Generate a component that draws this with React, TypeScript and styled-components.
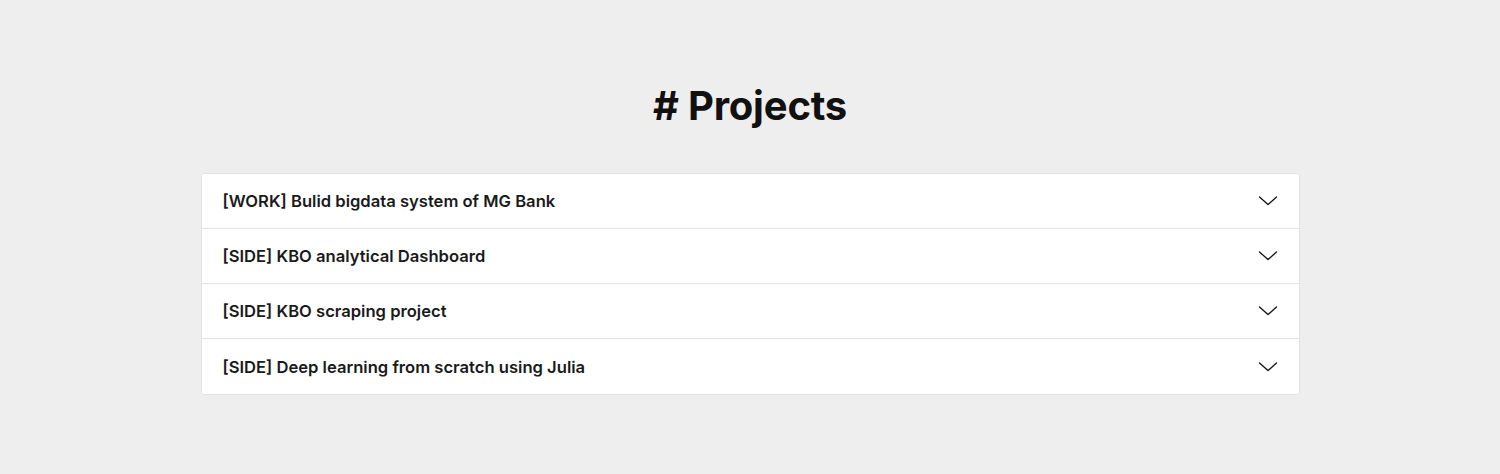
import React from "react";
import styled, { createGlobalStyle } from "styled-components";

const GlobalStyle = createGlobalStyle`
  html, body {
    margin: 0;
    padding: 0;
    background: #eeeeee;
  }
  body {
    font-family: Inter, "Noto Sans", "Liberation Sans", sans-serif;
    color: #111111;
  }
`;

const Page = styled.main`
  min-height: 474px;
  background: #eeeeee;
  display: flex;
  flex-direction: column;
  align-items: center;
  padding-top: 82px;
  box-sizing: border-box;
`;

const Title = styled.h1`
  margin: 0 0 43px;
  font-size: 40px;
  line-height: 48px;
  font-weight: 700;
  letter-spacing: -0.2px;
  color: #111111;
`;

const Card = styled.section`
  width: 1099px;
  background: #ffffff;
  border: 1px solid #e2e2e2;
  border-radius: 4px;
  box-sizing: border-box;
  overflow: hidden;
`;

const Row = styled.button<{ $last?: boolean }>`
  display: flex;
  align-items: center;
  justify-content: space-between;
  width: 100%;
  height: 55px;
  padding: 0 21px 0 21px;
  box-sizing: border-box;
  background: #ffffff;
  border: none;
  border-bottom: ${(p) => (p.$last ? "none" : "1px solid #e2e2e2")};
  font-family: inherit;
  cursor: pointer;
  text-align: left;
`;

const RowTitle = styled.span`
  font-size: 16.6px;
  font-weight: 600;
  color: #1a1a1a;
  letter-spacing: 0;
`;

const Chevron = () => (
  <svg width="20" height="10" viewBox="0 0 20 10" fill="none">
    <path d="M1.5 1L10 8.6L18.5 1" stroke="#111" strokeWidth="1.3" strokeLinecap="round" strokeLinejoin="round" />
  </svg>
);

const items = [
  "[WORK] Bulid bigdata system of MG Bank",
  "[SIDE] KBO analytical Dashboard",
  "[SIDE] KBO scraping project",
  "[SIDE] Deep learning from scratch using Julia",
];

export default function App() {
  return (
    <>
      <GlobalStyle />
      <Page>
        <Title># Projects</Title>
        <Card>
          {items.map((t, i) => (
            <Row key={t} $last={i === items.length - 1}>
              <RowTitle>{t}</RowTitle>
              <Chevron />
            </Row>
          ))}
        </Card>
      </Page>
    </>
  );
}
